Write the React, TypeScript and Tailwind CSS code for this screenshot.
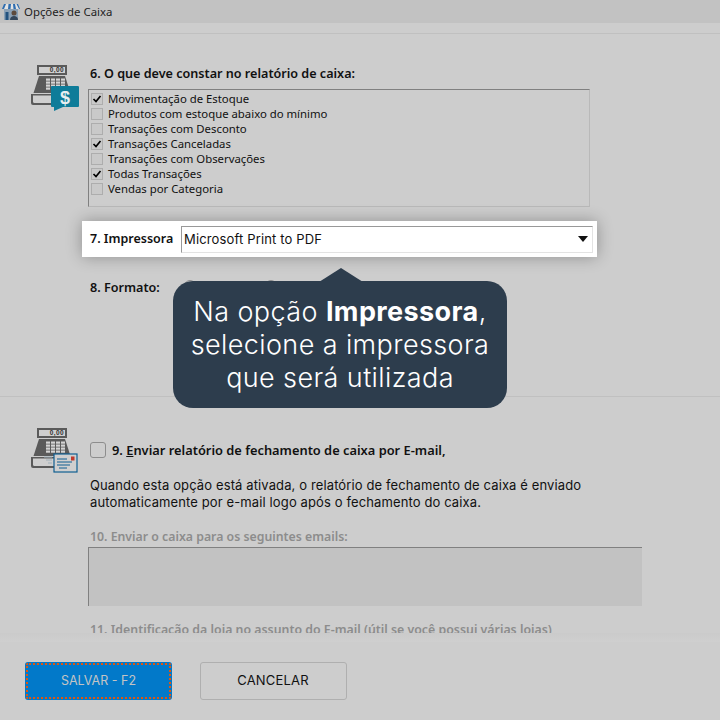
import React from "react";

const body = { fontFamily: '"Noto Sans", sans-serif' };

function Register({ children }: { children?: React.ReactNode }) {
  return (
    <svg width="50" height="46" viewBox="0 0 50 46" className="block">
      <path d="M7 0h30v10H7z" fill="#5a5a5a" />
      <path d="M9 2h26v6H9z" fill="#cfcfcf" />
      <text x="34" y="7.300" textAnchor="end" fontSize="6.500" fontWeight="700" fontFamily="Liberation Sans, sans-serif" fill="#333" letterSpacing="0.4">0,00</text>
      <path d="M9 11h26l5.500 17H3.500z" fill="#5a5a5a" />
      <g fill="#d4d4d4">
        {[0, 1, 2, 3].map((c) =>
          [0, 1, 2, 3].map((r) => (
            <rect key={`${c}${r}`} x={16 + c * 5} y={13.500 + r * 3} width="4" height="2.200" />
          ))
        )}
      </g>
      <path d="M1 29h42v9a2 2 0 0 1-2 2H3a2 2 0 0 1-2-2z" fill="#5a5a5a" />
      <path d="M3 30.500h38v6a1.500 1.500 0 0 1-1.500 1.500H4.500A1.500 1.500 0 0 1 3 36.500z" fill="#cfcfcf" />
      {children}
    </svg>
  );
}

function RowCheck({ on, label }: { on?: boolean; label: string }) {
  return (
    <div className="flex h-[15px] items-center">
      <div className="flex h-[12px] w-[12px] items-center justify-center border border-[#adadad] bg-[#c9c9c9]">
        {on && (
          <svg width="10" height="10" viewBox="0 0 10 10">
            <path d="M1.500 5l2.500 2.500L8.500 2" fill="none" stroke="#000" strokeWidth="1.700" />
          </svg>
        )}
      </div>
      <span className="ml-[5px] text-[11.350px] leading-[15px] text-[#111]">{label}</span>
    </div>
  );
}

export default function App() {
  return (
    <div className="relative flex h-[720px] w-[720px] flex-col overflow-hidden bg-[#cdcdcd]" style={body}>
      <div className="flex h-[23px] shrink-0 items-center bg-[#c2c2c2] pl-[2px]">
        <svg width="18" height="18" viewBox="0 0 18 18">
          <rect x="2" y="6" width="14" height="11" fill="#8aa0b5" />
          <path d="M2 1h14l2 5H0z" fill="#2f6db0" />
          <path d="M4 1h2.500l-.5 5H2zM9 1h2l.5 5h-3zM13 1h1.500L17 6h-3z" fill="#e3e3e3" />
          <circle cx="12" cy="10" r="2.500" fill="#5d4a3c" />
          <path d="M8 17c0-3 2-4 4-4s4 1 4 4z" fill="#34465a" />
          <rect x="3.500" y="9" width="3" height="8" fill="#23527f" />
        </svg>
        <span className="ml-[4px] text-[11.400px] text-[#222]">Opções de Caixa</span>
      </div>
      <div className="h-[11px] shrink-0 border-b border-[#c0c0c0]" />

      <div className="flex min-h-0 flex-1 flex-col overflow-hidden">
        <div className="flex pl-[30px] pt-[31px]">
          <div className="w-[58px]">
            <Register>
              <path d="M22 21h26a1.500 1.500 0 0 1 1 1v19a1 1 0 0 1-1 1H33l-9 4v-4h-2a1 1 0 0 1-1-1V22a1 1 0 0 1 1-1z" fill="#0e7c99" />
              <text x="35" y="39" textAnchor="middle" fontSize="18" fontWeight="700" fontFamily="Liberation Sans, sans-serif" fill="#e6eef0">$</text>
            </Register>
          </div>
          <div className="flex w-[502px] flex-col">
            <div className="ml-[2px] text-[12.600px] font-semibold leading-[18px] text-[#111]">6. O que deve constar no relatório de caixa:</div>
            <div className="mt-[6px] h-[118px] border border-[#b9b9b9] border-l-[#808080] border-t-[#808080] pl-[2px] pt-[1px]">
              <RowCheck on label="Movimentação de Estoque" />
              <RowCheck label="Produtos com estoque abaixo do mínimo" />
              <RowCheck label="Transações com Desconto" />
              <RowCheck on label="Transações Canceladas" />
              <RowCheck label="Transações com Observações" />
              <RowCheck on label="Todas Transações" />
              <RowCheck label="Vendas por Categoria" />
            </div>
          </div>
        </div>

        <div className="relative z-10 ml-[82px] mt-[14px] flex h-[36px] w-[515px] shrink-0 items-center bg-white pl-[8px] pr-[4px] shadow-[0_0_16px_rgba(0,0,0,0.3)]">
          <span className="w-[91px] text-[12.500px] font-semibold leading-[18px] text-[#111]">7. Impressora</span>
          <div className="flex h-[27px] flex-1 items-center justify-between border border-[#e3e3e3] border-l-[#999999] border-t-[#999999] pl-[2px] pr-[4px]">
            <span className="pt-[2px] text-[13px] tracking-[0.15px] text-[#111]" style={{ fontFamily: "Inter, sans-serif" }}>Microsoft Print to PDF</span>
            <svg width="10" height="6" viewBox="0 0 10 6"><path d="M0 0h10L5 6z" fill="#111" /></svg>
          </div>
        </div>

        <div className="mt-[23px] flex h-[16px] items-start pl-[90px]">
          <span className="w-[94px] text-[12.600px] font-semibold leading-[16px] text-[#111]">8. Formato:</span>
          <div className="h-[12px] w-[12px] rounded-full border border-[#8d8d8d]" />
          <div className="ml-[69px] h-[12px] w-[12px] rounded-full border border-[#8d8d8d]" />
        </div>

        <div className="mt-[100px] h-px shrink-0 bg-[#c0c0c0]" />

        <div className="flex pl-[30px] pt-[31px]">
          <div className="w-[60px]">
            <Register>
              <rect x="24" y="26" width="23" height="18" fill="#cfcfcf" stroke="#0f5f92" strokeWidth="1.200" />
              <rect x="41" y="28.500" width="3.500" height="4" fill="#c0392b" />
              <path d="M27 31h10M27 34h15M27 37h13M29 40h8" stroke="#0f5f92" strokeWidth="1" />
              <path d="M14 29h8M16 32h6M18 35h4" stroke="#9fb0ba" strokeWidth="1" />
            </Register>
          </div>
          <div className="flex flex-col pt-[13px]">
            <div className="flex items-center">
              <div className="h-[16px] w-[16px] rounded-[3px] border border-[#8d8d8d]" />
              <span className="ml-[6px] text-[12.850px] font-semibold leading-[18px] text-[#111]">
                9. <span className="underline">E</span>nviar relatório de fechamento de caixa por E-mail,
              </span>
            </div>
            <div className="mt-[18px] text-[13px] leading-[17px] tracking-[0.12px] text-[#111]" style={{ fontFamily: "Inter, sans-serif" }}>
              Quando esta opção está ativada, o relatório de fechamento de caixa é enviado<br />
              automaticamente por e-mail logo após o fechamento do caixa.
            </div>
          </div>
        </div>

        <div className="ml-[90px] mt-[17px] text-[12.300px] font-semibold leading-[18px] text-[#8c8c8c]">10. Enviar o caixa para os seguintes emails:</div>
        <div className="ml-[88px] mt-[1px] h-[59px] w-[554px] shrink-0 border-l border-t border-[#808080] bg-[#c2c2c2]" />
        <div className="ml-[90px] mt-[15px] whitespace-nowrap text-[12.350px] font-semibold leading-[18px] text-[#8c8c8c]">11. Identificação da loja no assunto do E-mail (útil se você possui várias lojas)</div>
      </div>

      <div className="relative z-10 flex h-[78px] shrink-0 items-start gap-[28px] bg-[#cdcdcd] pl-[25px] pt-[20px]" style={{ fontFamily: "Inter, sans-serif" }}>
        <div className="absolute left-0 top-[-9px] h-[9px] w-full bg-gradient-to-b from-[#cbcbcb] to-[#cfcfcf]" />
        <div className="flex h-[38px] w-[147px] items-center justify-center rounded-[3px] bg-[#0279c9] text-[12.500px] text-[#c4c4c4] outline-2 -outline-offset-[3px] outline-dotted outline-[#e0560f]">
          SALVAR - F2
        </div>
        <div className="flex h-[38px] w-[147px] items-center justify-center rounded-[3px] border border-[#afafaf] pr-[1px] text-[13px] tracking-[0.2px] text-[#111]">CANCELAR</div>
      </div>

      <div className="absolute left-[173px] top-[281px] z-20 flex h-[127px] w-[334px] flex-col items-center justify-center rounded-[20px] bg-[#2d3d4d] text-center text-[27px] font-light leading-[33px] tracking-[0.4px] text-white" style={{ fontFamily: "Inter, sans-serif" }}>
        <svg width="44" height="14" viewBox="0 0 44 14" className="absolute left-[146px] top-[-13px]">
          <path d="M0 14L22 0l22 14z" fill="#2d3d4d" />
        </svg>
        <div>Na opção <b className="font-bold">Impressora</b>,</div>
        <div>selecione a impressora</div>
        <div>que será utilizada</div>
      </div>
    </div>
  );
}
